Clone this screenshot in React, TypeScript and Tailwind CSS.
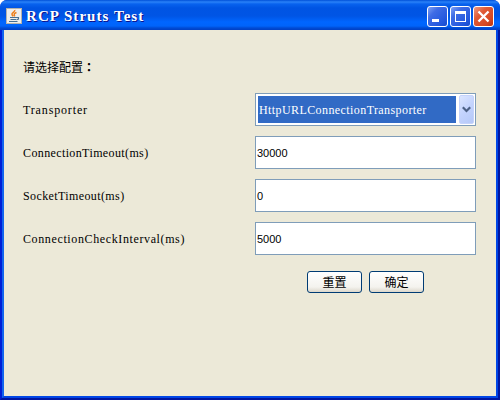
import React from "react";

const serif = "font-['Liberation_Serif',serif]";
const label = `${serif} h-[33px] w-[232px] text-[12px] leading-[34px] whitespace-pre`;
const field = "h-[33px] w-[221px] border border-[#7f9db9] bg-white";

const fields = [
  { name: "ConnectionTimeout(ms)", value: "30000", tracking: "tracking-[0.38px]" },
  { name: "SocketTimeout(ms)", value: "0", tracking: "tracking-[0.39px]" },
  { name: "ConnectionCheckInterval(ms)", value: "5000", tracking: "tracking-[0.62px]" },
];

function JavaIcon() {
  return (
    <svg width="16" height="16" viewBox="0 0 16 16" className="shrink-0">
      <rect x="0.5" y="0.5" width="15" height="15" fill="#eeeeec" stroke="#b5b2aa" />
      <path d="M8.800 2C9.200 4 5.300 4.700 6 6.500c.2.7.8 1.200 1.200 1.900M10.500 4.500C8.500 5.300 7.400 6 8.800 8.300" fill="none" stroke="#ec7f1c" strokeWidth="1.500" />
      <path d="M4 9.500h7M4.500 11.500h5.500M3 13.500h8.500M11 9.500h1.500v1.500l-2 .7" fill="none" stroke="#476f92" strokeWidth="1.100" />
    </svg>
  );
}

function WindowButton({ close, children }: { close?: boolean; children: React.ReactNode }) {
  const tone = close
    ? "bg-[linear-gradient(135deg,#ec9a83_0%,#df5a36_35%,#d74822_75%,#b9340f_100%)]"
    : "bg-[linear-gradient(135deg,#7fa1f5_0%,#3f6ce5_30%,#2458de_75%,#164bcd_100%)]";
  return (
    <button className={`h-[21px] w-[21px] rounded-[3px] border border-white ${tone}`}>
      <svg width="19" height="19" viewBox="0 0 19 19" className="block">{children}</svg>
    </button>
  );
}

function PushButton({ text }: { text: string }) {
  return (
    <button className="h-[22px] w-[55px] rounded-[3px] border border-[#003c74] bg-[linear-gradient(#ffffff,#f4f3ee_75%,#dcd7cb)] font-['Noto_Sans_CJK_SC',sans-serif] text-[12px] leading-[20px] text-black">
      {text}
    </button>
  );
}

export default function App() {
  return (
    <div className="flex h-[400px] w-[500px] flex-col bg-white text-black">
      <div className="flex h-full flex-col overflow-hidden rounded-t-[7px] bg-[#0831d9]">
        <header className="flex h-[30px] shrink-0 items-center bg-[linear-gradient(#0050d8_0px,#2a82f8_2px,#0862ee_4px,#0054e3_8px,#0055e5_16px,#0066ff_22px,#0064fa_26px,#004bd4_28px,#003fc4_30px)] px-[6px]">
          <div className="flex flex-1 items-center gap-1 pt-[2px]">
            <JavaIcon />
            <h1 className={`${serif} whitespace-pre text-[15px] font-bold leading-[16px] tracking-[1.05px] text-white [text-shadow:1px_1px_0_#0f1089]`}>RCP Struts Test</h1>
          </div>
          <div className="flex gap-[2px] pt-[3px]">
            <WindowButton><path d="M4 12h7v3H4z" fill="white" /></WindowButton>
            <WindowButton>
              <path d="M4 4h11v11H4zM5 7v7h9V7z" fill="white" fillRule="evenodd" />
            </WindowButton>
            <WindowButton close><path d="M4.500 4.500l10 10M14.500 4.500l-10 10" stroke="white" strokeWidth="2.300" /></WindowButton>
          </div>
        </header>
        <div className="flex flex-1 border-x-2 border-b-2 border-b-[#0016a0] border-l-[#001fd6] border-r-[#0016a0]">
          <main className="flex flex-1 flex-col border-x-2 border-b-2 border-b-[#0046e6] border-l-[#1264ee] border-r-[#0046e6] bg-[#ece9d8] pl-[19px] pt-[28px]">
            <p className="h-[35px] font-['Noto_Sans_CJK_SC',sans-serif] text-[12px] leading-[18px]">
              请选择配置<span className="font-['Noto_Sans_CJK_TC',sans-serif] font-bold" lang="zh-TW">：</span>
            </p>
            <div className="flex flex-col gap-[10px]">
              <div className="flex">
                <label className={`${label} tracking-[0.85px]`}>Transporter</label>
                <div className={`${field} flex justify-between py-px pl-[2px] pr-px`}>
                  <div className={`${serif} my-px h-[27px] w-[198px] whitespace-pre bg-[#316ac5] pl-px text-[12px] leading-[28px] tracking-[0.41px] text-white`}>HttpURLConnectionTransporter</div>
                  <div className="flex w-[15px] items-center justify-center rounded-[2px] border border-[#c5d3fb] bg-[linear-gradient(135deg,#dce6ff,#c3d3fd_50%,#b5c8f8)]">
                    <svg width="9" height="7" viewBox="0 0 9 7" className="shrink-0">
                      <path d="M.8 1.300l3.700 3.700 3.700-3.700" fill="none" stroke="#4d6185" strokeWidth="2.200" />
                    </svg>
                  </div>
                </div>
              </div>
              {fields.map((f) => (
                <div key={f.name} className="flex">
                  <label className={`${label} ${f.tracking}`}>{f.name}</label>
                  <div className={`${field} pl-[1px] font-['Liberation_Sans',sans-serif] text-[11px] leading-[32px]`}>{f.value}</div>
                </div>
              ))}
            </div>
            <div className="flex gap-[7px] pl-[284px] pt-[16px]">
              <PushButton text="重置" />
              <PushButton text="确定" />
            </div>
          </main>
        </div>
      </div>
    </div>
  );
}
